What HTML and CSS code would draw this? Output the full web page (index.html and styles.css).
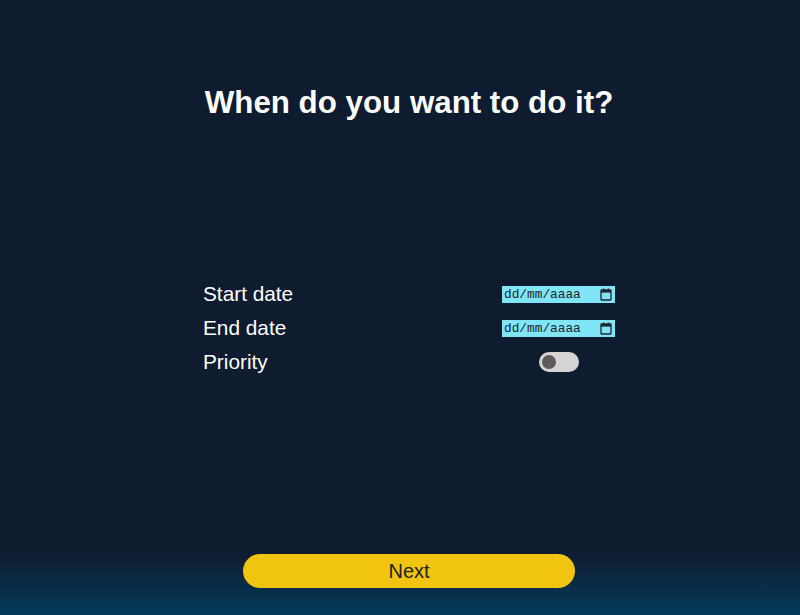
FILE: index.html
```html
<!DOCTYPE html>
<html lang="en">
<head>
<meta charset="utf-8">
<title>When do you want to do it?</title>
<link rel="stylesheet" href="styles.css">
</head>
<body>
<div class="app">
  <div class="panel">
    <h1 class="title">When do you want to do it?</h1>
    <div class="form">
      <div class="row">
        <span class="label">Start date</span>
        <div class="field">
          <div class="date">
            <span class="date-text">dd/mm/aaaa</span>
            <svg class="cal" width="12" height="13" viewBox="0 0 12 13"><rect x="1" y="2" width="10" height="10" rx="0.5" fill="none" stroke="#1c2630" stroke-width="1.3"/><rect x="1" y="2" width="10" height="2.6" fill="#1c2630"/><rect x="3" y="0.5" width="1.3" height="2" fill="#1c2630"/><rect x="7.7" y="0.5" width="1.3" height="2" fill="#1c2630"/></svg>
          </div>
        </div>
      </div>
      <div class="row">
        <span class="label">End date</span>
        <div class="field">
          <div class="date">
            <span class="date-text">dd/mm/aaaa</span>
            <svg class="cal" width="12" height="13" viewBox="0 0 12 13"><rect x="1" y="2" width="10" height="10" rx="0.5" fill="none" stroke="#1c2630" stroke-width="1.3"/><rect x="1" y="2" width="10" height="2.6" fill="#1c2630"/><rect x="3" y="0.5" width="1.3" height="2" fill="#1c2630"/><rect x="7.7" y="0.5" width="1.3" height="2" fill="#1c2630"/></svg>
          </div>
        </div>
      </div>
      <div class="row">
        <span class="label">Priority</span>
        <div class="field">
          <span class="toggle"><span class="knob"></span></span>
        </div>
      </div>
    </div>
    <div class="footer">
      <button class="next" type="button">Next</button>
    </div>
  </div>
</div>
</body>
</html>
```

FILE: styles.css
```css
html, body {
  margin: 0;
  padding: 0;
}
body {
  width: 800px;
  height: 615px;
  overflow: hidden;
  background: linear-gradient(to bottom, #0f1c2f 0, #0f1c2f 552px, #043a5b 615px);
  font-family: "Liberation Sans", Arial, sans-serif;
  color: #ffffff;
}
.app {
  height: 615px;
  padding-left: 18px;
  box-sizing: border-box;
}
.panel {
  width: 412px;
  margin: 0 auto;
  height: 615px;
  display: flex;
  flex-direction: column;
}
.title {
  margin: 85px 0 0 0;
  font-size: 31.3px;
  line-height: 36px;
  font-weight: bold;
  text-align: center;
  white-space: nowrap;
}
.form {
  margin-top: 156px;
  display: flex;
  flex-direction: column;
}
.row {
  display: grid;
  grid-template-columns: 1fr 113px;
  height: 34px;
  align-items: center;
}
.label {
  font-size: 20.8px;
  line-height: 34px;
}
.field {
  display: flex;
  justify-content: center;
  align-items: center;
}
.date {
  width: 113px;
  height: 17px;
  background: #80e5f6;
  display: flex;
  align-items: center;
  justify-content: space-between;
  padding: 0 2px 0 2px;
  box-sizing: border-box;
}
.date-text {
  font-family: "Liberation Mono", "DejaVu Sans Mono", monospace;
  font-size: 12.8px;
  color: #1b2430;
  letter-spacing: 0;
}
.cal {
  display: block;
  margin-right: 1px;
}
.toggle {
  width: 40px;
  height: 20px;
  border-radius: 10px;
  background: #d4d4d4;
  display: flex;
  align-items: center;
  padding-left: 3px;
  box-sizing: border-box;
}
.knob {
  width: 14px;
  height: 14px;
  border-radius: 50%;
  background: #605a5b;
}
.footer {
  margin-top: auto;
  padding: 0 40px 27px 40px;
}
.next {
  display: block;
  width: 100%;
  height: 34px;
  border: none;
  border-radius: 17px;
  background: #f1c40f;
  color: #222222;
  font-family: "Liberation Sans", Arial, sans-serif;
  font-size: 20px;
  padding: 0;
}
```
